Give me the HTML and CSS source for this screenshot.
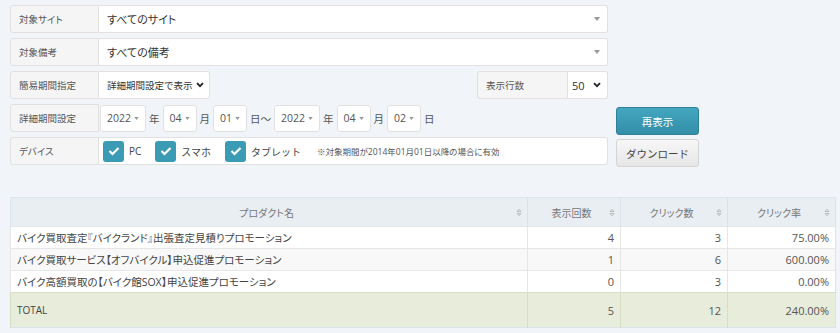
FILE: index.html
```html
<!DOCTYPE html>
<html>
<head>
  <meta charset="utf-8">
  <title>プロモーションレポート</title>
  <link rel="stylesheet" href="styles.css">
</head>
<body>
  <div class="page">
    <div class="filters">
      <div class="form">
        <div class="row">
          <div class="label">対象サイト</div>
          <div class="select wide">
            <span class="value">すべてのサイト</span>
            <svg class="caret" width="6" height="4" viewBox="0 0 6 4"><path d="M0 0 L6 0 L3 4 Z" fill="#999"/></svg>
          </div>
        </div>
        <div class="row">
          <div class="label">対象備考</div>
          <div class="select wide">
            <span class="value">すべての備考</span>
            <svg class="caret" width="6" height="4" viewBox="0 0 6 4"><path d="M0 0 L6 0 L3 4 Z" fill="#999"/></svg>
          </div>
        </div>
        <div class="row split">
          <div class="group">
            <div class="label">簡易期間指定</div>
            <div class="select native period">
              <span class="value">詳細期間設定で表示</span>
              <svg class="chevron" width="8" height="6" viewBox="0 0 8 6"><path d="M1 1.2 L4 4.2 L7 1.2" fill="none" stroke="#222" stroke-width="1.8"/></svg>
            </div>
          </div>
          <div class="group">
            <div class="label rows-label">表示行数</div>
            <div class="select native rows">
              <span class="value">50</span>
              <svg class="chevron" width="8" height="6" viewBox="0 0 8 6"><path d="M1 1.2 L4 4.2 L7 1.2" fill="none" stroke="#222" stroke-width="1.8"/></svg>
            </div>
          </div>
        </div>
        <div class="row">
          <div class="label">詳細期間設定</div>
          <div class="dates">
            <div class="select date year"><span class="value">2022</span><svg class="caret" width="5" height="3" viewBox="0 0 6 4"><path d="M0 0 L6 0 L3 4 Z" fill="#999"/></svg></div>
            <span class="unit">年</span>
            <div class="select date"><span class="value">04</span><svg class="caret" width="5" height="3" viewBox="0 0 6 4"><path d="M0 0 L6 0 L3 4 Z" fill="#999"/></svg></div>
            <span class="unit">月</span>
            <div class="select date"><span class="value">01</span><svg class="caret" width="5" height="3" viewBox="0 0 6 4"><path d="M0 0 L6 0 L3 4 Z" fill="#999"/></svg></div>
            <span class="unit">日〜</span>
            <div class="select date year"><span class="value">2022</span><svg class="caret" width="5" height="3" viewBox="0 0 6 4"><path d="M0 0 L6 0 L3 4 Z" fill="#999"/></svg></div>
            <span class="unit">年</span>
            <div class="select date"><span class="value">04</span><svg class="caret" width="5" height="3" viewBox="0 0 6 4"><path d="M0 0 L6 0 L3 4 Z" fill="#999"/></svg></div>
            <span class="unit">月</span>
            <div class="select date"><span class="value">02</span><svg class="caret" width="5" height="3" viewBox="0 0 6 4"><path d="M0 0 L6 0 L3 4 Z" fill="#999"/></svg></div>
            <span class="unit">日</span>
          </div>
        </div>
        <div class="row">
          <div class="label">デバイス</div>
          <div class="devices">
            <label class="check"><span class="box"><svg width="12" height="10" viewBox="0 0 12 10"><path d="M1.5 5 L4.5 8 L10.5 2" fill="none" stroke="#fff" stroke-width="2.2"/></svg></span>PC</label>
            <label class="check"><span class="box"><svg width="12" height="10" viewBox="0 0 12 10"><path d="M1.5 5 L4.5 8 L10.5 2" fill="none" stroke="#fff" stroke-width="2.2"/></svg></span>スマホ</label>
            <label class="check"><span class="box"><svg width="12" height="10" viewBox="0 0 12 10"><path d="M1.5 5 L4.5 8 L10.5 2" fill="none" stroke="#fff" stroke-width="2.2"/></svg></span>タブレット</label>
            <span class="note">※対象期間が2014年01月01日以降の場合に有効</span>
          </div>
        </div>
      </div>
      <div class="actions">
        <button class="btn btn-primary">再表示</button>
        <button class="btn btn-default">ダウンロード</button>
      </div>
    </div>

    <table class="report">
      <colgroup>
        <col style="width: 517px">
        <col style="width: 93px">
        <col style="width: 107px">
        <col style="width: 108px">
      </colgroup>
      <thead>
        <tr>
          <th><div class="th-in"><span class="th-text">プロダクト名</span><svg class="sort" width="6" height="9" viewBox="0 0 6 9"><path d="M1 3.5 L3 1.2 L5 3.5 Z M1 5.5 L3 7.8 L5 5.5 Z" fill="none" stroke="#b0b0b0" stroke-width="0.8"/></svg></div></th>
          <th><div class="th-in"><span class="th-text">表示回数</span><svg class="sort" width="6" height="9" viewBox="0 0 6 9"><path d="M1 3.5 L3 1.2 L5 3.5 Z M1 5.5 L3 7.8 L5 5.5 Z" fill="none" stroke="#b0b0b0" stroke-width="0.8"/></svg></div></th>
          <th><div class="th-in"><span class="th-text">クリック数</span><svg class="sort" width="6" height="9" viewBox="0 0 6 9"><path d="M1 3.5 L3 1.2 L5 3.5 Z M1 5.5 L3 7.8 L5 5.5 Z" fill="none" stroke="#b0b0b0" stroke-width="0.8"/></svg></div></th>
          <th><div class="th-in"><span class="th-text">クリック率</span><svg class="sort" width="6" height="9" viewBox="0 0 6 9"><path d="M1 3.5 L3 1.2 L5 3.5 Z M1 5.5 L3 7.8 L5 5.5 Z" fill="none" stroke="#b0b0b0" stroke-width="0.8"/></svg></div></th>
        </tr>
      </thead>
      <tbody>
        <tr>
          <td>バイク買取査定『バイクランド』出張査定見積りプロモーション</td>
          <td class="num">4</td>
          <td class="num">3</td>
          <td class="num">75.00%</td>
        </tr>
        <tr class="alt">
          <td>バイク買取サービス【オフバイクル】申込促進プロモーション</td>
          <td class="num">1</td>
          <td class="num">6</td>
          <td class="num">600.00%</td>
        </tr>
        <tr>
          <td>バイク高額買取の【バイク館SOX】申込促進プロモーション</td>
          <td class="num">0</td>
          <td class="num">3</td>
          <td class="num">0.00%</td>
        </tr>
      </tbody>
      <tfoot>
        <tr>
          <td>TOTAL</td>
          <td class="num">5</td>
          <td class="num">12</td>
          <td class="num">240.00%</td>
        </tr>
      </tfoot>
    </table>
  </div>
</body>
</html>
```

FILE: styles.css
```css
/* page */
body {
  margin: 0;
  background-color: #f1f4f8;
  font-family: "Open Sans", "Noto Sans CJK JP", sans-serif;
  color: #444;
  font-feature-settings: "palt";
}

.page {
  padding: 5px 0 0 10px;
}

/* filter form */
.filters {
  display: flex;
  align-items: flex-start;
}

.form {
  width: 598px;
  display: flex;
  flex-direction: column;
  gap: 5px;
}

.row {
  display: flex;
  height: 28px;
}

.row.split {
  justify-content: space-between;
}

.group {
  display: flex;
}

.label {
  width: 89px;
  box-sizing: border-box;
  padding-left: 8px;
  display: flex;
  align-items: center;
  background-color: #f5f5f5;
  border: 1px solid #e1e1e1;
  border-radius: 3px 0 0 3px;
  font-size: 9.5px;
  color: #555;
}

.rows-label {
  width: 91px;
}

.select {
  display: flex;
  align-items: center;
  box-sizing: border-box;
  background-color: #fff;
  border: 1px solid #e1e1e1;
  border-left: none;
  border-radius: 0 3px 3px 0;
  padding: 0 7px 0 8px;
  font-size: 11px;
  color: #333;
  white-space: nowrap;
}

.select .value {
  flex: 1;
}

.select.wide {
  flex: 1;
}

.select.period {
  width: 111px;
  font-size: 9.5px;
  font-feature-settings: normal;
  padding-left: 8px;
  padding-right: 5px;
}

.select.rows {
  width: 40px;
  padding-left: 4px;
  padding-right: 6px;
  font-size: 11px;
}

.dates {
  display: flex;
  align-items: center;
  gap: 3px;
  padding-left: 1px;
}

.select.date {
  height: 27px;
  width: 34px;
  border: 1px solid #e1e1e1;
  border-radius: 3px;
  padding: 0 6px 0 6px;
  font-size: 10.5px;
  color: #555;
}

.select.date.year {
  width: 46px;
}

.unit {
  font-size: 10.5px;
  color: #555;
}

.devices {
  flex: 1;
  display: flex;
  align-items: center;
  background-color: #fff;
  border: 1px solid #e1e1e1;
  border-left: none;
  border-radius: 0 3px 3px 0;
  padding-left: 4px;
}

.check {
  display: flex;
  align-items: center;
  gap: 5px;
  font-size: 10px;
  font-feature-settings: normal;
  color: #444;
  margin-right: 14px;
}

.check .box {
  width: 21px;
  height: 21px;
  border-radius: 3px;
  background-color: #3b9bb4;
  display: flex;
  align-items: center;
  justify-content: center;
}

.note {
  margin-left: 2px;
  font-size: 8.5px;
  color: #555;
}

/* buttons */
.actions {
  display: flex;
  flex-direction: column;
  gap: 4px;
  margin-left: 8px;
  padding-top: 102px;
}

.btn {
  width: 83px;
  height: 28px;
  border-radius: 3px;
  font-family: inherit;
  font-size: 10.5px;
  cursor: pointer;
}

.btn-primary {
  background: linear-gradient(#44a6bf, #338ea8);
  border: 1px solid #2e8099;
  color: #fff;
}

.btn-default {
  background: linear-gradient(#f7f7f7, #e6e6e6);
  border: 1px solid #d4d4d4;
  color: #444;
}

/* report table */
.report {
  margin-top: 30px;
  border-collapse: collapse;
  table-layout: fixed;
  width: 825px;
  background-color: #fff;
  border: 1px solid #dce3ea;
  font-size: 10.5px;
}

.report th {
  height: 28px;
  background-color: #e9eef3;
  border-left: 1px solid #dce3ea;
  font-weight: normal;
  font-size: 10px;
  color: #777;
  padding: 0 5px 0 6px;
}

.th-in {
  display: flex;
  align-items: center;
}

.th-text {
  flex: 1;
  text-align: center;
}

.report td {
  height: 21px;
  padding: 0 6px;
  border-top: 1px solid #e6e6e6;
  border-left: 1px solid #e6e6e6;
  color: #444;
}

.report td.num {
  text-align: right;
  font-size: 11px;
  color: #555;
}

.report tr.alt td {
  background-color: #f8f8f8;
}

.report tfoot td {
  height: 34px;
  background-color: #e8ecda;
  border-top: 1px solid #d7dec3;
  border-left: 1px solid #d7dec3;
  font-size: 10px;
}

.report tfoot td.num {
  font-size: 11px;
}
```
